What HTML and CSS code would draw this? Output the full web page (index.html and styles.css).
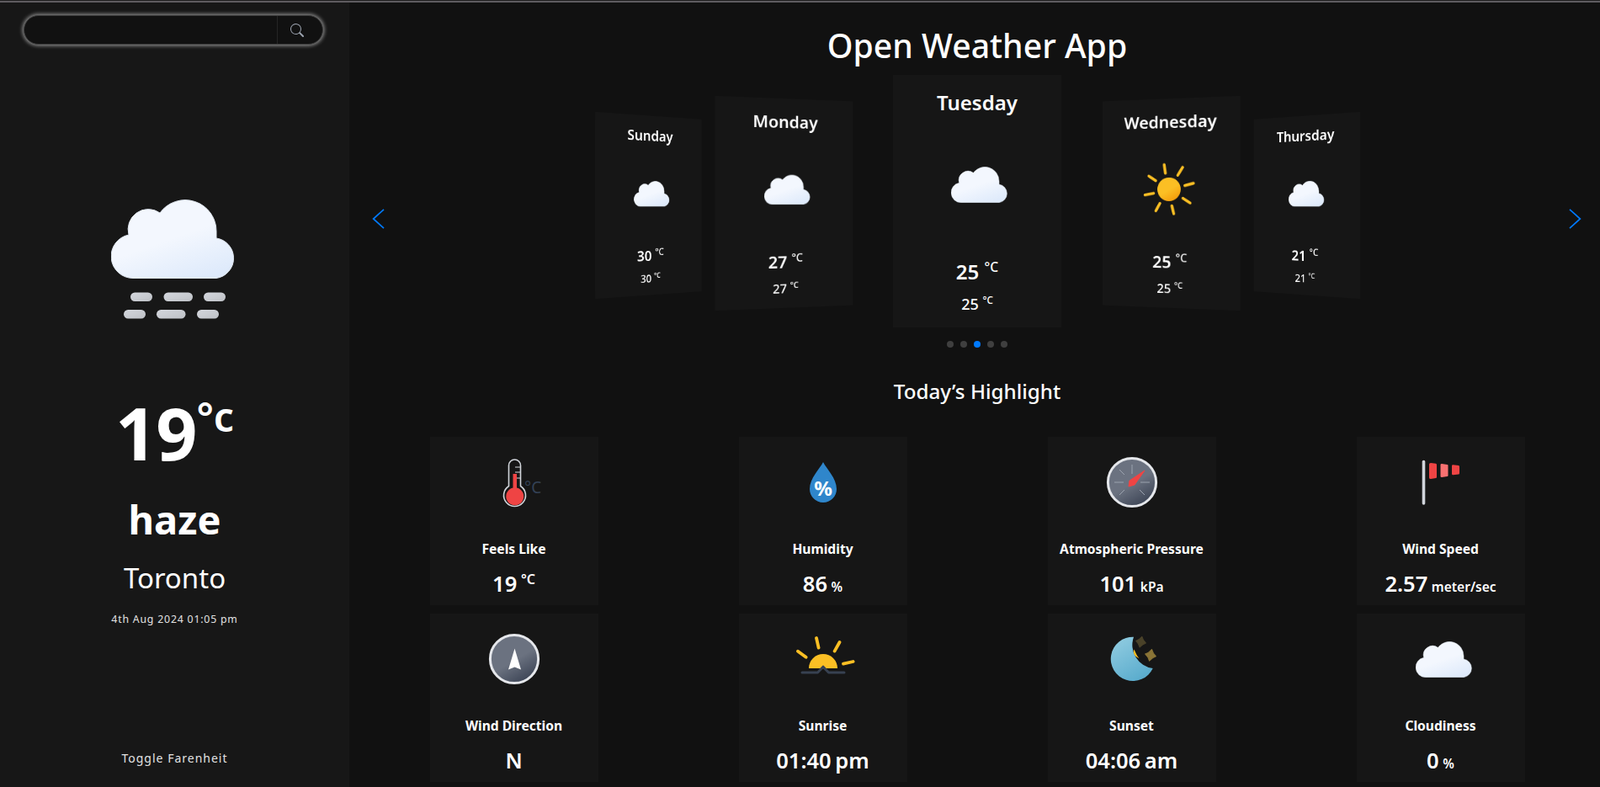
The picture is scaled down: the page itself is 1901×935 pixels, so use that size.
FILE: index.html
```html
<!DOCTYPE html>
<html>
<head>
    <title>Open Weather App</title>
    <link rel="stylesheet" href="styles.css">
</head>
<body>
    <svg class="defs" width="0" height="0">
        <defs>
            <linearGradient id="cloudFill" x1="0.25" y1="0.1" x2="0.75" y2="1">
                <stop offset="0" stop-color="#f3f7fe"/>
                <stop offset="0.45" stop-color="#f3f7fe"/>
                <stop offset="1" stop-color="#deeafb"/>
            </linearGradient>
            <linearGradient id="hazeFill" x1="0" y1="0" x2="1" y2="1">
                <stop offset="0" stop-color="#d4d7dd"/>
                <stop offset="1" stop-color="#bec1c6"/>
            </linearGradient>
            <linearGradient id="dialFill" x1="0.25" y1="0.1" x2="0.75" y2="0.95">
                <stop offset="0" stop-color="#6b7280"/>
                <stop offset="0.5" stop-color="#6b7280"/>
                <stop offset="1" stop-color="#3d4556"/>
            </linearGradient>
            <linearGradient id="sunFill" x1="0.25" y1="0.1" x2="0.75" y2="0.95">
                <stop offset="0" stop-color="#fbbf24"/>
                <stop offset="0.5" stop-color="#fbbf24"/>
                <stop offset="1" stop-color="#f59e0b"/>
            </linearGradient>
            <linearGradient id="moonFill" x1="0.25" y1="0.1" x2="0.75" y2="0.95">
                <stop offset="0" stop-color="#8ac8de"/>
                <stop offset="1" stop-color="#5aaccd"/>
            </linearGradient>
            <symbol id="cloud" viewBox="0 0 149 94">
                <path d="M26 93.5A26 26 0 0 1 21 42A24 24 0 0 1 58 16A37 37 0 0 1 125 38V46A24 24 0 0 1 125 93.5Z" fill="url(#cloudFill)" stroke="#dfe6f0" stroke-width="1"/>
            </symbol>
        </defs>
    </svg>

    <div class="topline"></div>

    <div class="app">
        <aside class="sidebar">
            <form class="search">
                <input class="search-input" type="text">
                <button class="search-btn" type="button">
                    <svg width="16" height="16" viewBox="0 0 16 16"><path fill="#9ca3af" d="M11.742 10.344a6.5 6.5 0 1 0-1.397 1.398h-.001c.03.04.062.078.098.115l3.85 3.85a1 1 0 0 0 1.415-1.414l-3.85-3.85a1.007 1.007 0 0 0-.115-.1zM12 6.5a5.5 5.5 0 1 1-11 0 5.5 5.5 0 0 1 11 0z"/></svg>
                </button>
            </form>

            <svg class="haze-icon" width="149" height="142" viewBox="0 0 149 142">
                <use href="#cloud" width="149" height="94"/>
                <g fill="url(#hazeFill)">
                    <rect x="23" y="110.5" width="26" height="10.5" rx="5.2"/>
                    <rect x="62.5" y="110.5" width="34.5" height="10.5" rx="5.2"/>
                    <rect x="110" y="110.5" width="26" height="10.5" rx="5.2"/>
                    <rect x="15" y="131" width="26" height="10.5" rx="5.2"/>
                    <rect x="54" y="131" width="34.5" height="10.5" rx="5.2"/>
                    <rect x="102" y="131" width="26" height="10.5" rx="5.2"/>
                </g>
            </svg>

            <div class="now-temp">19<sup>°c</sup></div>
            <div class="now-desc">haze</div>
            <div class="now-city">Toronto</div>
            <div class="now-date">4th Aug 2024 01:05 pm</div>
            <a class="toggle-unit">Toggle Farenheit</a>
        </aside>

        <main class="content">
            <h1 class="title">Open Weather App</h1>

            <div class="carousel">
                <svg class="nav nav-prev" width="15" height="24" viewBox="0 0 15 24"><path d="M14 .8 1.6 12 14 23.2" fill="none" stroke="#007aff" stroke-width="1.7"/></svg>

                <div class="slide slide-far-left">
                    <div class="slide-day">Sunday</div>
                    <svg class="slide-icon" viewBox="0 0 100 100"><use href="#cloud" x="19" y="29" width="68" height="43"/></svg>
                    <div class="slide-high">30 <sup>°C</sup></div>
                    <div class="slide-low">30 <sup>°C</sup></div>
                </div>
                <div class="slide slide-left">
                    <div class="slide-day">Monday</div>
                    <svg class="slide-icon" viewBox="0 0 100 100"><use href="#cloud" x="19" y="29" width="68" height="43"/></svg>
                    <div class="slide-high">27 <sup>°C</sup></div>
                    <div class="slide-low">27 <sup>°C</sup></div>
                </div>
                <div class="slide">
                    <div class="slide-day">Tuesday</div>
                    <svg class="slide-icon" viewBox="0 0 100 100"><use href="#cloud" x="19" y="29" width="68" height="43"/></svg>
                    <div class="slide-high">25 <sup>°C</sup></div>
                    <div class="slide-low">25 <sup>°C</sup></div>
                </div>
                <div class="slide slide-right">
                    <div class="slide-day">Wednesday</div>
                    <svg class="slide-icon" viewBox="0 0 100 100">
                        <circle cx="49" cy="50" r="17" fill="url(#sunFill)"/>
                        <path d="M42 14.6 43.8 26.7M68.8 18.6 61.7 30M84.3 41.5 72 44.8M79.6 69.7 69.2 62.9M56 85 53.2 73.8M29.7 81 35.8 70.1M13.7 58 26.4 55.6M19.4 30.7 29.7 37.5" stroke="#fbbf24" stroke-width="4" stroke-linecap="round"/>
                    </svg>
                    <div class="slide-high">25 <sup>°C</sup></div>
                    <div class="slide-low">25 <sup>°C</sup></div>
                </div>
                <div class="slide slide-far-right">
                    <div class="slide-day">Thursday</div>
                    <svg class="slide-icon" viewBox="0 0 100 100"><use href="#cloud" x="19" y="29" width="68" height="43"/></svg>
                    <div class="slide-high">21 <sup>°C</sup></div>
                    <div class="slide-low">21 <sup>°C</sup></div>
                </div>

                <svg class="nav nav-next" width="15" height="24" viewBox="0 0 15 24"><path d="M1 .8 13.4 12 1 23.2" fill="none" stroke="#007aff" stroke-width="1.7"/></svg>
            </div>

            <div class="dots">
                <span class="dot"></span>
                <span class="dot"></span>
                <span class="dot dot-active"></span>
                <span class="dot"></span>
                <span class="dot"></span>
            </div>

            <h2 class="section-title">Today’s Highlight</h2>

            <div class="highlights">
                <div class="card">
                    <svg class="card-icon" viewBox="0 0 100 100">
                        <path d="M43.5 30a7 7 0 0 1 14 0V54.5a13 13 0 1 1-14 0Z" fill="none" stroke="#d1d5db" stroke-width="1.6"/>
                        <path d="M51 32H57M51 38H57M51 45H57" stroke="#d1d5db" stroke-width="1.2"/>
                        <path d="M48.5 40h4.5V56.5a10.5 10.5 0 1 1-4.5 0Z" fill="#ef4444"/>
                        <text class="icon-unit" x="62" y="63">°C</text>
                    </svg>
                    <div class="card-label">Feels Like</div>
                    <div class="card-value">19 <sup>°C</sup></div>
                </div>
                <div class="card">
                    <svg class="card-icon" viewBox="0 0 100 100">
                        <path d="M50 26C54 34 66 45 66 58A16 16 0 0 1 34 58C34 45 46 34 50 26Z" fill="#2f86cb"/>
                        <text class="icon-pct" x="50" y="66">%</text>
                    </svg>
                    <div class="card-label">Humidity</div>
                    <div class="card-value">86 <small>%</small></div>
                </div>
                <div class="card">
                    <svg class="card-icon" viewBox="0 0 100 100">
                        <circle cx="50" cy="50" r="28.6" fill="url(#dialFill)" stroke="#e5e7eb" stroke-width="3"/>
                        <path d="M50 29V40M29 50H40M60 50H71M35 35l6 6M65 65l-6-6M35 65l6-6" stroke="#9ca3af" stroke-width="1"/>
                        <path d="M46 55 47 48 65 36 53 53Z" fill="#ef4444" stroke="#ef4444" stroke-width="1" stroke-linejoin="round"/>
                    </svg>
                    <div class="card-label">Atmospheric Pressure</div>
                    <div class="card-value">101 <small>kPa</small></div>
                </div>
                <div class="card">
                    <svg class="card-icon" viewBox="0 0 100 100">
                        <path d="M29.5 25.5V75" stroke="#d1d5db" stroke-width="3.6" stroke-linecap="round"/>
                        <path d="M36 28.5Q36 27 38 27L44 27.8Q45 28 45 29.5V43.5Q45 45 44 45L38 46Q36 46 36 44.5Z" fill="#ef4444"/>
                        <path d="M49.5 29Q49.5 28 51 28L57.5 29Q58.5 29 58.5 30V42Q58.5 43 57.5 43L51 44Q49.5 44 49.5 43Z" fill="#f87171"/>
                        <path d="M63 30.5Q63 29 64.5 29.2L71 30Q72 30.2 72 31.5V39Q72 40.5 71 40.6L64.5 41.3Q63 41.4 63 40Z" fill="#ef4444"/>
                    </svg>
                    <div class="card-label">Wind Speed</div>
                    <div class="card-value">2.57 <small>meter/sec</small></div>
                </div>
                <div class="card">
                    <svg class="card-icon" viewBox="0 0 100 100">
                        <circle cx="50" cy="50" r="28.6" fill="url(#dialFill)" stroke="#e5e7eb" stroke-width="3"/>
                        <path d="M50.5 37.5 58 62.5 50.5 59.6 43 62.5Z" fill="#fff"/>
                    </svg>
                    <div class="card-label">Wind Direction</div>
                    <div class="card-value">N</div>
                </div>
                <div class="card">
                    <svg class="card-icon" viewBox="0 0 100 100">
                        <path d="M33 61A17 17 0 0 1 67 61Z" fill="#fbbf24"/>
                        <path d="M42 25 44.6 36.6M69.5 30 63.6 40.6M20 40.7 29.6 47.8M85.6 53 74 55.6" stroke="#fbbf24" stroke-width="3.8" stroke-linecap="round"/>
                        <path d="M25 66H43.5L50 59.2 56.5 66H75" fill="none" stroke="#374151" stroke-width="3" stroke-linecap="round" stroke-linejoin="round"/>
                    </svg>
                    <div class="card-label">Sunrise</div>
                    <div class="card-value">01:40 pm</div>
                </div>
                <div class="card">
                    <svg class="card-icon" viewBox="0 0 100 100">
                        <path d="M52 23.7A26.2 26.2 0 1 0 74.7 61A28 28 0 0 1 52 23.7Z" fill="url(#moonFill)"/>
                        <path d="M52.5 38.5C51 42 52 46.5 58.5 49.2C55.5 46 54.5 43 52.5 38.5Z" fill="#fbbf24"/>
                        <path transform="translate(60.5 29.7) rotate(12)" d="M0-6.5Q2.2-2.2 6 0 2.2 2.2 0 6.5-2.2 2.2-6 0-2.2-2.2 0-6.5Z" fill="#4a4229" stroke="#4a4229" stroke-width="1" stroke-linejoin="round"/>
                        <path transform="translate(72 45.3) rotate(12)" d="M0-7Q2.4-2.4 6.5 0 2.4 2.4 0 7-2.4 2.4-6.5 0-2.4-2.4 0-7Z" fill="#8a7436" stroke="#8a7436" stroke-width="1" stroke-linejoin="round"/>
                    </svg>
                    <div class="card-label">Sunset</div>
                    <div class="card-value">04:06 am</div>
                </div>
                <div class="card">
                    <svg class="card-icon" viewBox="0 0 100 100"><use href="#cloud" x="20" y="29" width="68" height="43"/></svg>
                    <div class="card-label">Cloudiness</div>
                    <div class="card-value">0 <small>%</small></div>
                </div>
            </div>
        </main>
    </div>
</body>
</html>
```

FILE: styles.css
```css
* {
    box-sizing: border-box;
}
html, body {
    height: 100%;
}
body {
    margin: 0;
    background-color: #111111;
    color: #ffffff;
    font-family: "Noto Sans", "Open Sans", sans-serif;
    overflow: hidden;
}
.defs {
    display: block;
    height: 0;
}
.topline {
    height: 3px;
    background-color: #5f5c60;
    border-top: 1px solid #1e1e1e;
}
.app {
    display: flex;
    height: 932px;
}

/* left column */
.sidebar {
    width: 415px;
    flex-shrink: 0;
    background-color: #171717;
    display: flex;
    flex-direction: column;
    align-items: center;
    padding-top: 15px;
    text-align: center;
}
.search {
    display: flex;
    width: 356px;
    height: 35px;
    margin-left: -3px;
    background-color: #111111;
    border: 1px solid #3c3c3c;
    border-radius: 18px;
    box-shadow: 0 0 4px 1.5px #8c8c8c;
}
.search-input {
    flex: 1;
    min-width: 0;
    background: transparent;
    border: 0;
    outline: 0;
}
.search-btn {
    width: 54px;
    display: flex;
    align-items: center;
    justify-content: center;
    padding: 0 8px 0 0;
    background: transparent;
    border: 0;
    border-left: 1px solid #252525;
}
.haze-icon {
    margin-top: 184px;
    margin-left: -2px;
}
.now-temp {
    margin-top: 82px;
    font-size: 86px;
    font-weight: 700;
    line-height: 106px;
    letter-spacing: -1px;
}
.now-temp sup {
    font-size: 48px;
    font-weight: 600;
    line-height: 0;
    vertical-align: 34px;
    letter-spacing: 0;
}
.now-desc {
    margin-top: 19px;
    font-size: 47px;
    font-weight: 700;
    line-height: 62px;
}
.now-city {
    margin-top: 18px;
    font-size: 33px;
    line-height: 42px;
}
.now-date {
    margin-top: 18.5px;
    font-size: 12.3px;
    line-height: 18px;
    letter-spacing: 0.8px;
    color: #e2e2e2;
}
.toggle-unit {
    margin-top: 146px;
    font-size: 14px;
    line-height: 20px;
    letter-spacing: 1px;
    color: #e2e2e2;
}

/* right column */
.content {
    flex: 1;
    min-width: 0;
    padding-left: 6px;
}
.title {
    margin: 27px 0 0;
    font-size: 39.2px;
    font-weight: 500;
    line-height: 48px;
    text-align: center;
}
.carousel {
    position: relative;
    display: flex;
    justify-content: center;
    margin-top: 11px;
}
.nav {
    position: absolute;
    top: 159px;
}
.nav-prev {
    left: 21px;
}
.nav-next {
    right: 22px;
}
.slide {
    width: 200px;
    height: 300px;
    padding-top: 16px;
    background-color: #161616;
    text-align: center;
}
.slide-far-left {
    transform: translate(12px, 5px) perspective(768px) rotateY(27.2deg) scale(0.709);
}
.slide-left {
    transform: translate(-27.5px, 2.5px) perspective(523px) rotateY(9.5deg) scale(0.828);
}
.slide-right {
    transform: translate(28.7px, 2.5px) perspective(523px) rotateY(-9.5deg) scale(0.828);
}
.slide-far-right {
    transform: translate(-10.7px, 5px) perspective(768px) rotateY(-27.2deg) scale(0.709);
}
.slide-day {
    font-size: 24px;
    font-weight: 600;
    line-height: 34px;
}
.slide-icon {
    display: block;
    width: 100px;
    height: 100px;
    margin: 30px auto 0;
}
.slide-high {
    margin-top: 36px;
    font-size: 24px;
    font-weight: 600;
    line-height: 36px;
}
.slide-low {
    margin-top: 6px;
    font-size: 18px;
    font-weight: 500;
    line-height: 28px;
}
.slide-high sup,
.slide-low sup {
    font-size: 65%;
    font-weight: 500;
    line-height: 0;
}
.dots {
    display: flex;
    justify-content: center;
    gap: 8px;
    margin-top: 16px;
}
.dot {
    width: 8px;
    height: 8px;
    border-radius: 50%;
    background-color: #3f3f3f;
}
.dot-active {
    background-color: #007aff;
}
.section-title {
    margin: 36px 0 0;
    font-size: 24.2px;
    font-weight: 500;
    line-height: 32px;
    text-align: center;
}
.highlights {
    display: grid;
    grid-template-columns: repeat(4, 200px);
    grid-auto-rows: 200px;
    justify-content: center;
    column-gap: 167px;
    row-gap: 10px;
    margin-top: 38px;
}
.card {
    padding-top: 4px;
    background-color: #161616;
    text-align: center;
}
.card-icon {
    display: block;
    width: 100px;
    height: 100px;
    margin: 0 auto;
}
.card-label {
    margin-top: 18px;
    font-size: 15.6px;
    font-weight: 700;
    line-height: 22px;
}
.card-value {
    margin-top: 11.5px;
    font-size: 25.5px;
    font-weight: 600;
    line-height: 36px;
    word-spacing: -2px;
}
.card-value small {
    font-size: 15.5px;
}
.card-value sup {
    font-size: 16px;
    line-height: 0;
}
.icon-unit {
    font-size: 19px;
    fill: #334155;
}
.icon-pct {
    font-size: 24px;
    font-weight: 700;
    fill: #ffffff;
    text-anchor: middle;
}
```
